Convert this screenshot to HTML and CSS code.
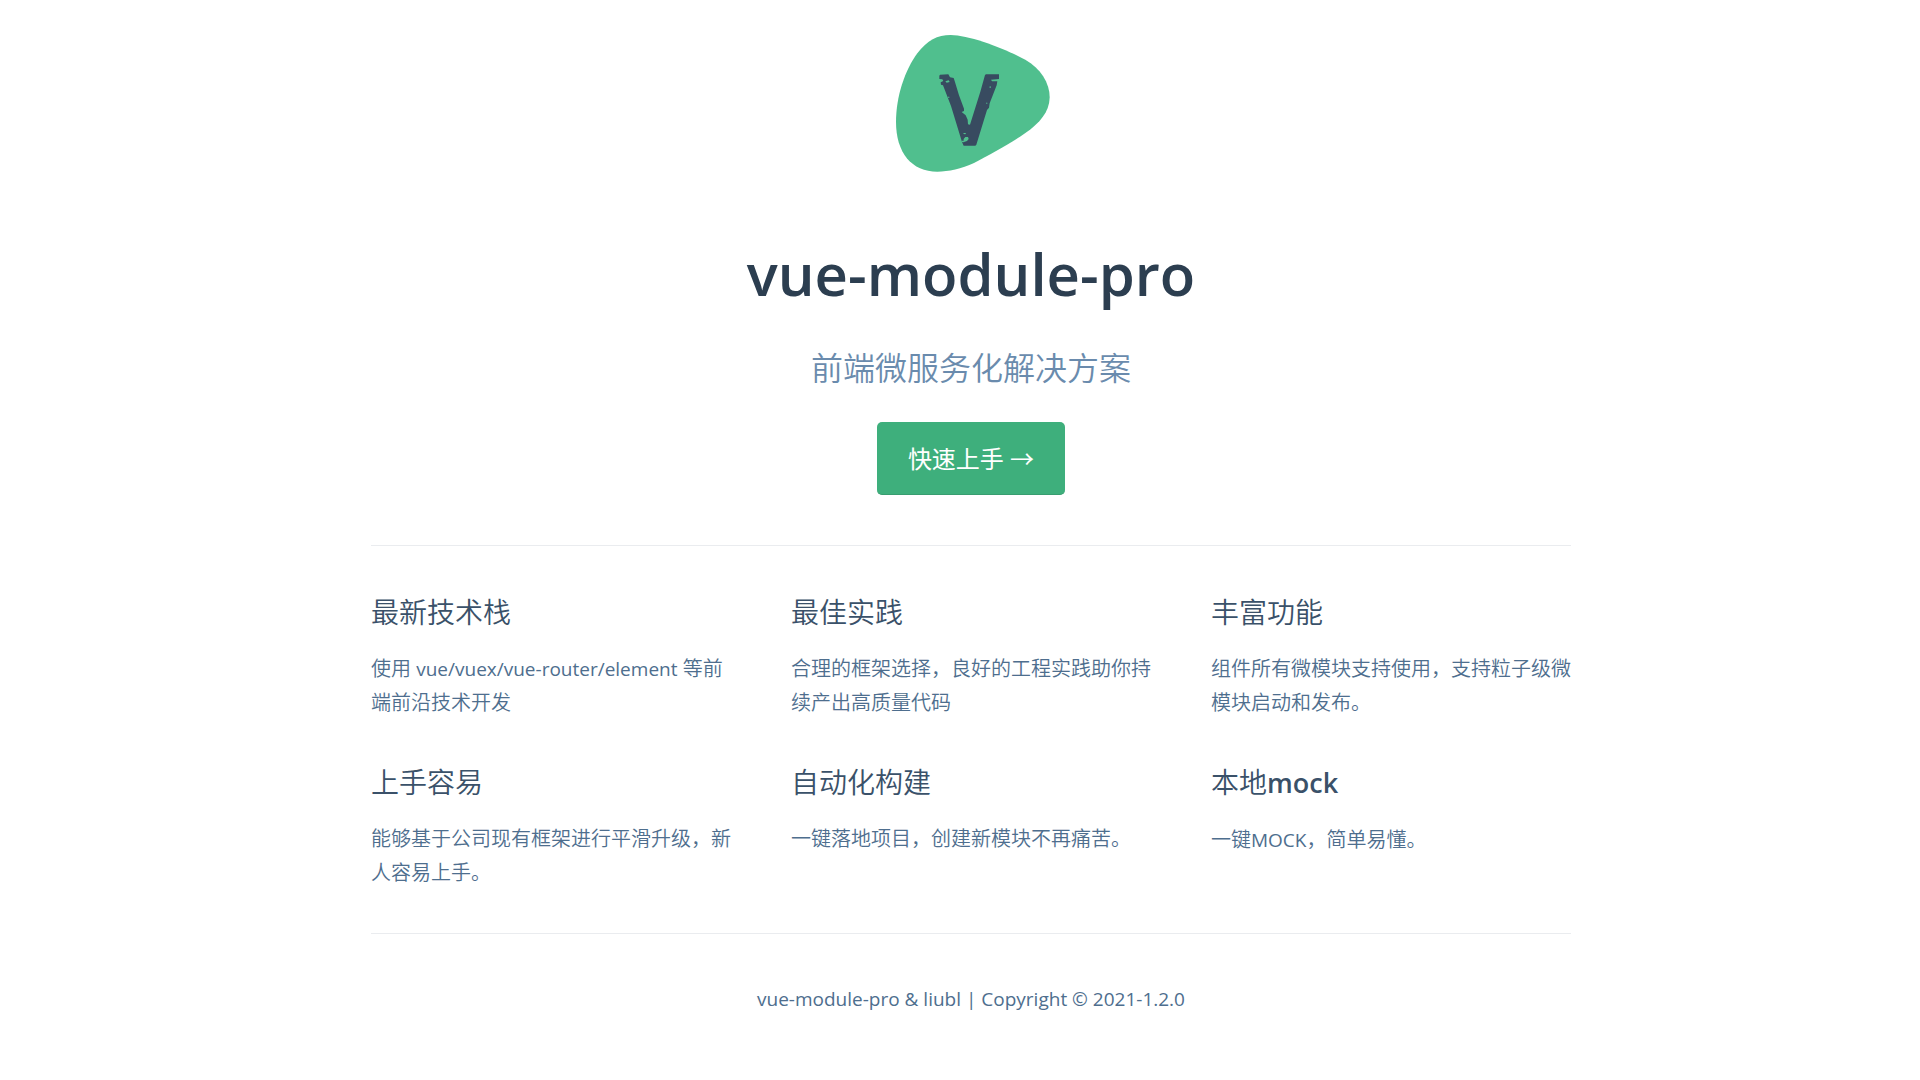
FILE: index.html
```html
<!DOCTYPE html>
<html lang="zh-CN">
<head>
<meta charset="utf-8">
<meta name="viewport" content="width=device-width, initial-scale=1">
<title>vue-module-pro</title>
<link rel="stylesheet" href="styles.css">
</head>
<body>
<main class="home">
  <header class="hero">
    <svg class="logo" viewBox="33 45 480 411" role="img" aria-label="vue-module-pro">
      <path fill="#50bf8e" d="M212 45C270 46 375 86 436 119C482 145 510 190 509 233C508 275 480 308 435 340C395 368 330 404 282 429C245 446 205 455 172 455C95 455 48 398 48 305C48 230 75 150 112 100C142 61 172 45 212 45Z"/>
      <path fill="#384b60" d="M180 164L205 163L210 172L221 174L224 183L237 226L252 266L252 273L245 276L257 286L263 299L264 313L270 314L301 215L315 165L318 163L357 163L357 177L333 179L336 184L352 184L350 196L329 250L327 263L321 270L289 374L286 377L251 377L246 366L213 258L189 196L183 194L182 187L190 183L187 178L178 177L178 167Z"/>
      <path fill="#50bf8e" d="M196 184L206 181L209 186L200 188ZM204 230L208 230L208 233L205 234ZM328 200L332 199L333 203L329 203ZM318 248L322 248L322 251L319 251ZM250 339L258 339L256 343L251 342ZM251 357L256 351L264 351L266 357L261 363L250 367L246 366L245 362L251 362Z"/>
    </svg>
    <h1 class="title">vue-module-pro</h1>
    <p class="tagline">前端微服务化解决方案</p>
    <a class="action" href="#features">快速上手 →</a>
  </header>
  <section class="features" id="features">
    <article class="feature">
      <h2>最新技术栈</h2>
      <p>使用 <span class="latin">vue/vuex/vue-router/element</span> 等前端前沿技术开发</p>
    </article>
    <article class="feature">
      <h2>最佳实践</h2>
      <p>合理的框架选择，良好的工程实践助你持续产出高质量代码</p>
    </article>
    <article class="feature">
      <h2>丰富功能</h2>
      <p>组件所有微模块支持使用，支持粒子级微模块启动和发布。</p>
    </article>
    <article class="feature">
      <h2>上手容易</h2>
      <p>能够基于公司现有框架进行平滑升级，新人容易上手。</p>
    </article>
    <article class="feature">
      <h2>自动化构建</h2>
      <p>一键落地项目，创建新模块不再痛苦。</p>
    </article>
    <article class="feature">
      <h2>本地<span class="latin">mock</span></h2>
      <p>一键<span class="latin">MOCK</span>，简单易懂。</p>
    </article>
  </section>
  <footer class="footer">vue-module-pro &amp; liubl | Copyright © 2021-1.2.0</footer>
</main>
</body>
</html>
```
FILE: styles.css
```css
* {
  box-sizing: border-box;
}

body {
  margin: 0;
  padding-left: 22px;
  background: #fff;
  color: #2c3e50;
  font-family: "Open Sans", "Noto Sans CJK SC", sans-serif;
  font-size: 20px;
  line-height: 34px;
}

.home {
  max-width: 1200px;
  margin: 0 auto;
  padding-top: 35px;
}

.hero {
  display: flex;
  flex-direction: column;
  align-items: center;
  padding-bottom: 50px;
  text-align: center;
}

.logo {
  width: 160px;
  height: 137px;
}

.title {
  margin: 64px 0 0;
  font-size: 58px;
  font-weight: 600;
  line-height: 76px;
}

.tagline {
  margin: 35px 0 33px;
  color: #6a8bad;
  font-size: 32px;
  font-weight: 350;
  line-height: 42px;
}

.action {
  padding: 17px 31px 15px;
  border-bottom: 1px solid #389d70;
  border-radius: 5px;
  background: #3eaf7c;
  color: #fff;
  font-size: 24px;
  line-height: 40px;
  text-decoration: none;
}

.features {
  display: grid;
  grid-template-columns: repeat(auto-fit, minmax(300px, 1fr));
  gap: 44px 60px;
  padding: 48px 0 43px;
  border-top: 1px solid #eaecef;
}

.feature h2 {
  margin: 0 0 22px;
  color: #3a5169;
  font-size: 28px;
  font-weight: 350;
  line-height: 36px;
}

.feature h2 .latin {
  font-size: 27px;
  font-weight: 600;
}

.feature p {
  margin: 0;
  color: #4e6e8e;
  font-weight: 350;
}

.feature p .latin {
  font-size: 19px;
  font-weight: 400;
}

.footer {
  padding: 48px 0;
  border-top: 1px solid #eaecef;
  color: #4e6e8e;
  font-size: 19px;
  text-align: center;
}
```
